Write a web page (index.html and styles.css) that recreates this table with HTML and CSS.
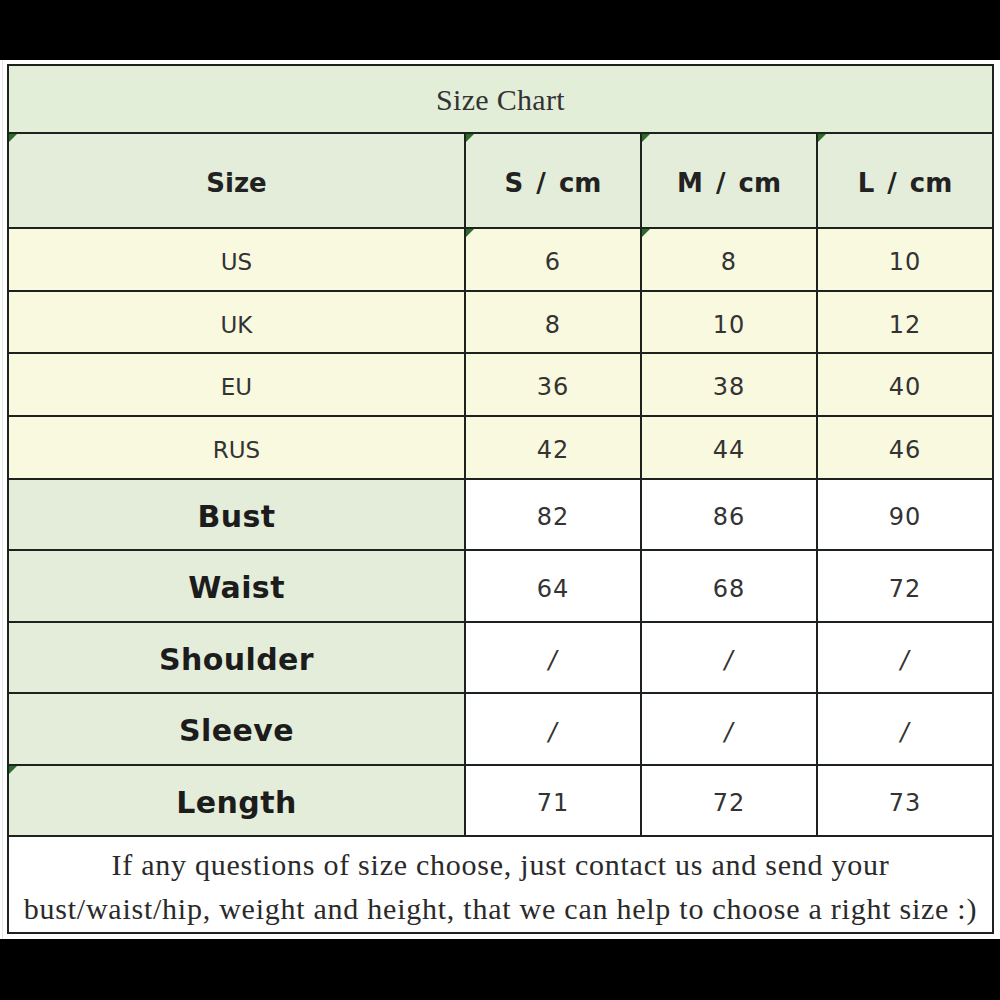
FILE: index.html
```html
<!DOCTYPE html>
<html>
<head>
<meta charset="utf-8">
<link rel="stylesheet" href="styles.css">
</head>
<body>
<div class="top-bar"></div>
<div class="sheet">
  <table class="chart">
    <colgroup>
      <col class="c-label">
      <col class="c-val">
      <col class="c-val">
      <col class="c-val">
    </colgroup>
    <tr class="r-title"><td colspan="4" class="title">Size Chart</td></tr>
    <tr class="r-head">
      <th class="head tri">Size</th>
      <th class="head tri">S / cm</th>
      <th class="head tri">M / cm</th>
      <th class="head tri">L / cm</th>
    </tr>
    <tr class="r-conv a"><td class="conv">US</td><td class="conv num tri">6</td><td class="conv num tri">8</td><td class="conv num">10</td></tr>
    <tr class="r-conv b"><td class="conv">UK</td><td class="conv num">8</td><td class="conv num">10</td><td class="conv num">12</td></tr>
    <tr class="r-conv a"><td class="conv">EU</td><td class="conv num">36</td><td class="conv num">38</td><td class="conv num">40</td></tr>
    <tr class="r-conv a"><td class="conv">RUS</td><td class="conv num">42</td><td class="conv num">44</td><td class="conv num">46</td></tr>
    <tr class="r-meas a"><td class="lbl">Bust</td><td class="val">82</td><td class="val">86</td><td class="val">90</td></tr>
    <tr class="r-meas b"><td class="lbl">Waist</td><td class="val">64</td><td class="val">68</td><td class="val">72</td></tr>
    <tr class="r-meas a"><td class="lbl">Shoulder</td><td class="val slash">/</td><td class="val slash">/</td><td class="val slash">/</td></tr>
    <tr class="r-meas b"><td class="lbl">Sleeve</td><td class="val slash">/</td><td class="val slash">/</td><td class="val slash">/</td></tr>
    <tr class="r-meas a"><td class="lbl tri">Length</td><td class="val">71</td><td class="val">72</td><td class="val">73</td></tr>
    <tr class="r-note"><td colspan="4" class="note">If any questions of size choose, just contact us and send your<br>bust/waist/hip, weight and height, that we can help to choose a right size :)</td></tr>
  </table>
</div>
</body>
</html>
```
FILE: styles.css
```css
html, body {
  margin: 0;
  padding: 0;
  background: #000;
  height: 1000px;
  overflow: hidden;
}
.top-bar {
  height: 60px;
  background: #000;
}
.sheet {
  background: #fdfefd;
  height: 879px;
  padding: 4px 0 0 7px;
  box-sizing: border-box;
  background-image:
    linear-gradient(to right, transparent 2px, #e4e6e4 2px, #e4e6e4 3px, transparent 3px);
}
.chart {
  border-collapse: collapse;
  table-layout: fixed;
  width: 987px;
}
.c-label { width: 457px; }
.c-val { width: 176px; }
.chart .cell, .chart td, .chart th {
  border: 2px solid #1e221e;
  padding: 0;
  text-align: center;
  vertical-align: middle;
  color: #1f1f1f;
  position: relative;
}
.r-title { height: 68px; }
.r-head { height: 95px; }
.r-conv.a { height: 63px; }
.r-conv.b { height: 62px; }
.r-meas.a { height: 71px; }
.r-meas.b { height: 72px; }
.r-note { height: 97px; }

.chart .title {
  background: #e3eed9;
  font-family: "Liberation Serif", "Times New Roman", serif;
  font-size: 30px;
  letter-spacing: 0.3px;
  color: #333;
  padding-top: 2px;
}
.chart .head {
  background: #e3edd9;
  font-family: "DejaVu Sans", Verdana, sans-serif;
  font-weight: bold;
  font-size: 26px;
  word-spacing: 4px;
  color: #222;
  padding-top: 5px;
}
.chart .conv {
  background: #f9f9df;
  font-family: "DejaVu Sans", Verdana, sans-serif;
  font-size: 23px;
  color: #333;
  padding-top: 5px;
}
.chart .num {
  font-size: 24px;
  letter-spacing: 1px;
}
.chart .lbl {
  background: #e3edd9;
  font-family: "DejaVu Sans", Verdana, sans-serif;
  font-weight: bold;
  font-size: 30px;
  letter-spacing: 0.4px;
  color: #1c1c1c;
  padding-top: 3px;
}
.chart .val {
  background: #ffffff;
  font-family: "DejaVu Sans", Verdana, sans-serif;
  font-size: 24px;
  letter-spacing: 1px;
  color: #333;
  padding-top: 5px;
}
.chart .slash {
  font-style: italic;
  font-weight: 300;
}
.chart .note {
  background: #ffffff;
  font-family: "Liberation Serif", "Times New Roman", serif;
  font-size: 30px;
  letter-spacing: 0.75px;
  line-height: 44px;
  color: #2a2a2a;
  padding-top: 5px;
}
.tri::before {
  content: "";
  position: absolute;
  left: 0;
  top: 0;
  width: 0;
  height: 0;
  border-top: 8px solid #2d6b2d;
  border-right: 8px solid transparent;
}
```
